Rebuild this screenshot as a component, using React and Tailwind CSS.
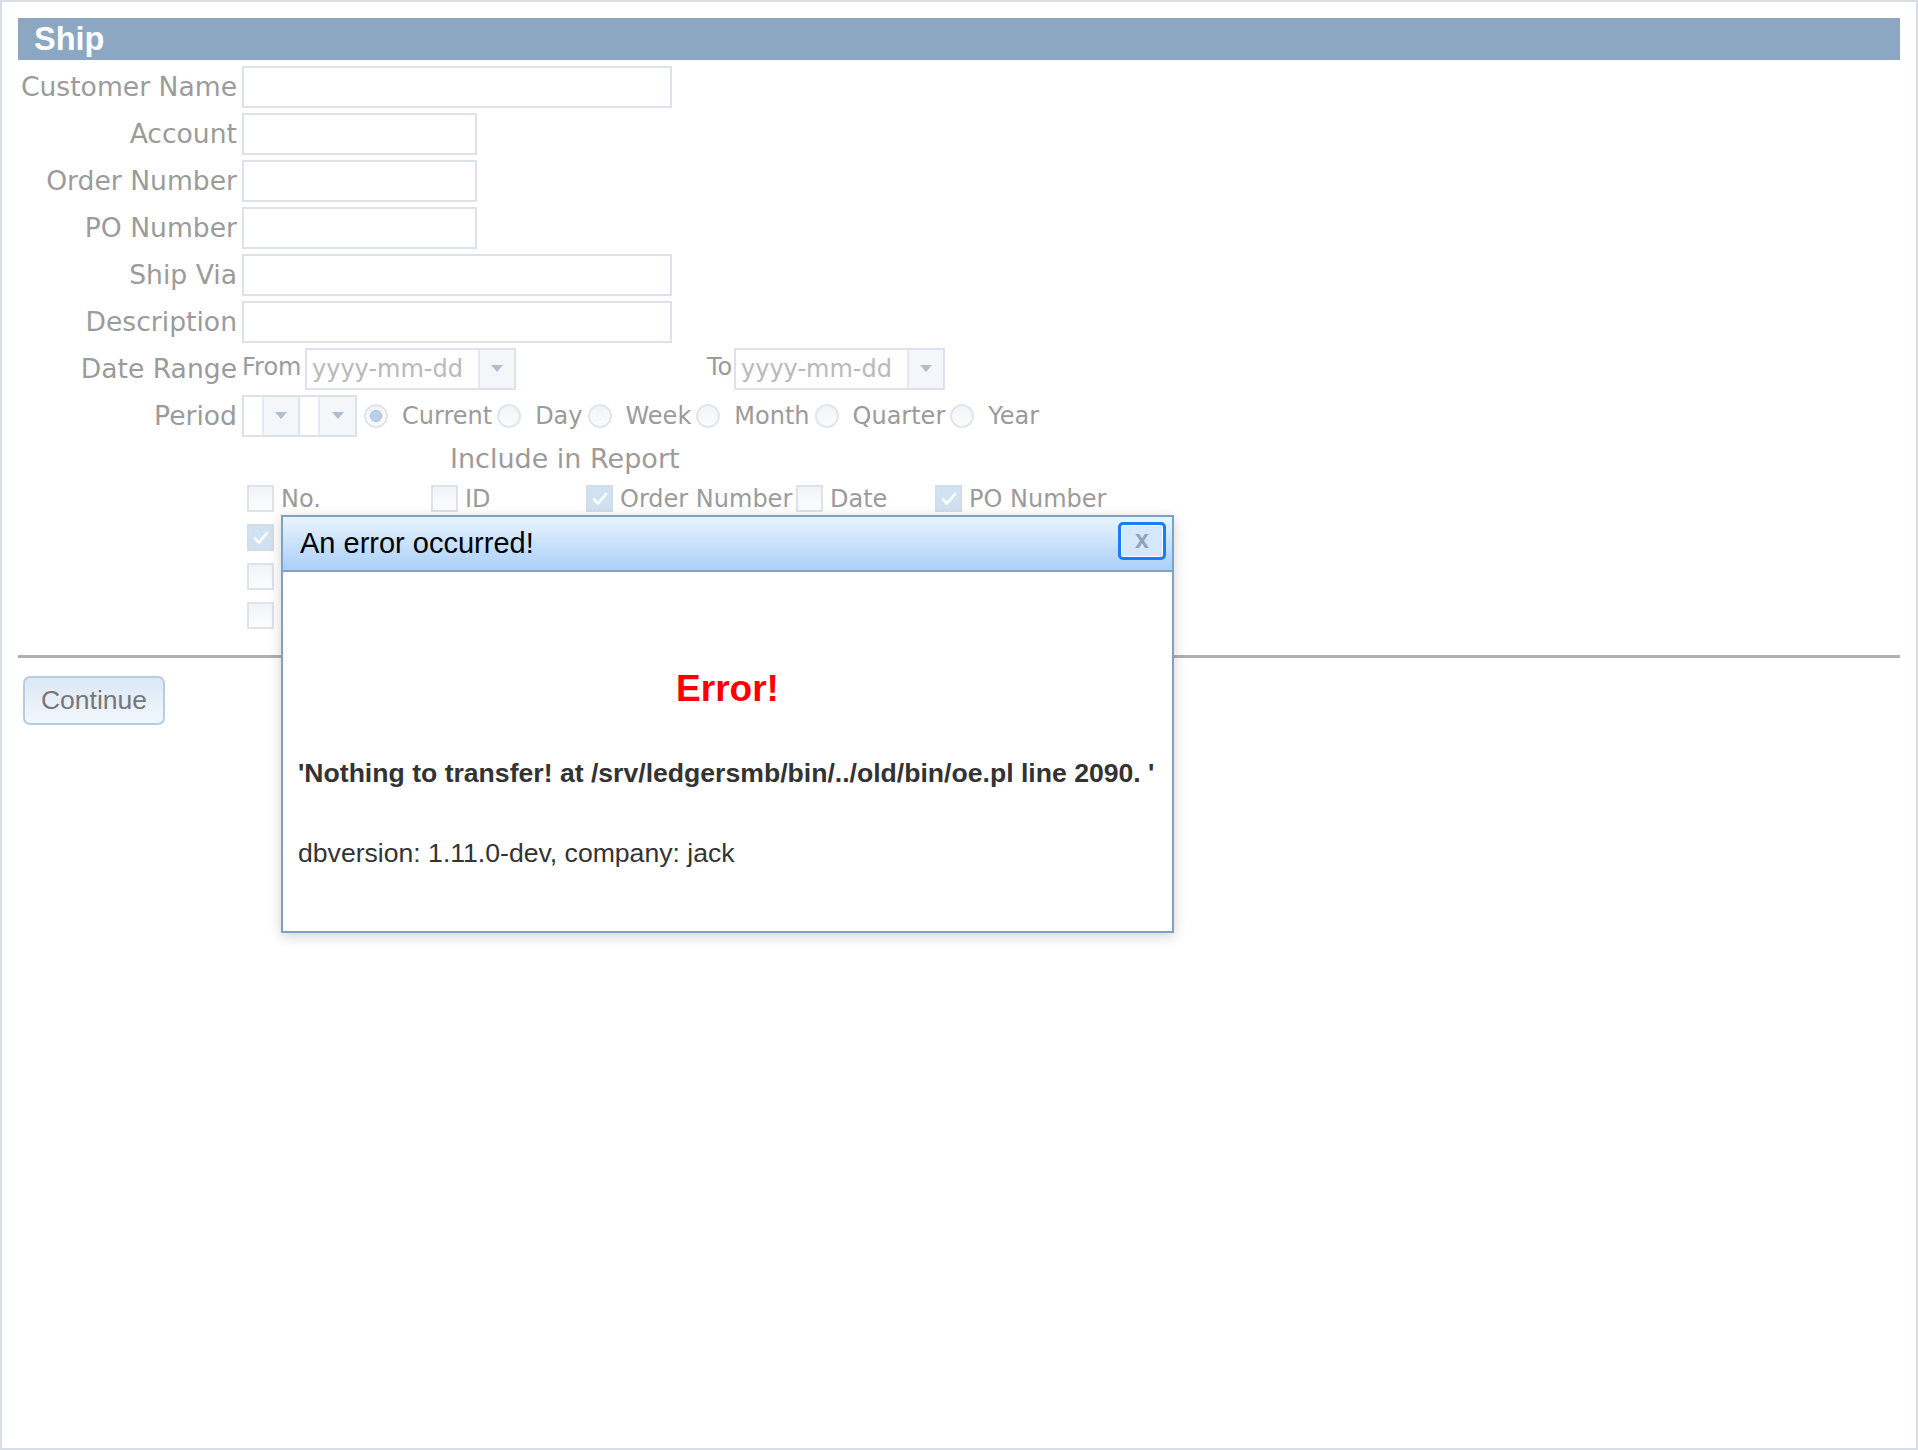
import React from 'react'

const labelCls = "w-[219px] shrink-0 whitespace-nowrap text-right text-[26.6px] leading-[30px] text-[#9b9b9b]"

function Arrow() {
  return (
    <svg width="12" height="7" viewBox="0 0 12 7">
      <path d="M0 0 L12 0 L6 7 Z" fill="#aebdd0" />
    </svg>
  )
}

function TextBox({ wide }) {
  return <div className={wide ? "h-[42px] w-[430px] border-2 border-[#dde2ea] bg-white" : "h-[42px] w-[235px] border-2 border-[#dde2ea] bg-white"} />
}

function DateBox() {
  return (
    <div className="flex h-[42px] w-[211px] border-2 border-[#dde2ea] bg-white">
      <span className="flex-1 pl-[5px] text-[24px] leading-[38px] text-[#b9b9b9]">yyyy-mm-dd</span>
      <span className="flex w-[36px] items-center justify-center border-l-2 border-[#e5e9ee] bg-[#f4f6f9]">
        <Arrow />
      </span>
    </div>
  )
}

function SmallSelect({ w }) {
  return (
    <div className={w === 1 ? "flex h-[42px] w-[58px] border-2 border-[#dde2ea] bg-white" : "flex h-[42px] w-[57px] border-2 border-l-0 border-[#dde2ea] bg-white"}>
      <span className="w-[18px]" />
      <span className="flex flex-1 items-center justify-center border-l-2 border-[#e5e9ee] bg-[#f4f6f9]">
        <Arrow />
      </span>
    </div>
  )
}

function Radio({ checked, label, first }) {
  return (
    <div className={first ? "ml-[7px] flex items-center" : "ml-[5px] flex items-center"}>
      <span className="flex h-[24px] w-[24px] items-center justify-center rounded-full border-2 border-[#e1e6ec] bg-linear-to-b from-[#f1f4f7] to-[#fbfcfd]">
        {checked && <span className="h-[12px] w-[12px] rounded-full border border-[#9fbedc] bg-[#b9d2ea]" />}
      </span>
      <span className="ml-[14px] text-[24px] leading-[30px] text-[#9b9b9b]">{label}</span>
    </div>
  )
}

function Check({ checked, label }) {
  return (
    <div className="flex items-center">
      <span className={checked ? "flex h-[27px] w-[27px] items-center justify-center border-2 border-[#d3dde8] bg-[#d0e1f1]" : "h-[27px] w-[27px] border-2 border-[#dfe3e9] bg-linear-to-b from-[#f1f4f8] to-[#fcfdfe]"}>
        {checked && (
          <svg width="18" height="16" viewBox="0 0 18 16">
            <path d="M3 8.5 L7 12.5 L15 3" stroke="#ffffff" strokeWidth="2.6" fill="none" strokeLinecap="round" strokeLinejoin="round" />
          </svg>
        )}
      </span>
      {label && <span className="ml-[7px] text-[24px] leading-[30px] text-[#9b9b9b]">{label}</span>}
    </div>
  )
}

const checkRows = [
  [[false, 'No.'], [false, 'ID'], [true, 'Order Number'], [false, 'Date'], [true, 'PO Number']],
  [[true], [false], [true], [false], [false]],
  [[false], [false], [false], [false], [false]],
  [[false], [false], [false], [false], [false]],
]

export default function App() {
  return (
    <div className="relative h-[1450px] w-[1918px] border-2 border-[#d9dde6] bg-white p-4 font-['DejaVu_Sans',sans-serif]">
      <div className="flex h-[42px] items-center bg-[#8ba7c2] pl-4">
        <span className="font-['Liberation_Sans',sans-serif] text-[32.5px] font-bold leading-none text-white">Ship</span>
      </div>

      <div className="mt-[3px]">
        <div className="flex h-[47px] items-center">
          <span className={labelCls}>Customer Name</span>
          <div className="ml-[5px]"><TextBox wide /></div>
        </div>
        <div className="flex h-[47px] items-center">
          <span className={labelCls}>Account</span>
          <div className="ml-[5px]"><TextBox /></div>
        </div>
        <div className="flex h-[47px] items-center">
          <span className={labelCls}>Order Number</span>
          <div className="ml-[5px]"><TextBox /></div>
        </div>
        <div className="flex h-[47px] items-center">
          <span className={labelCls}>PO Number</span>
          <div className="ml-[5px]"><TextBox /></div>
        </div>
        <div className="flex h-[47px] items-center">
          <span className={labelCls}>Ship Via</span>
          <div className="ml-[5px]"><TextBox wide /></div>
        </div>
        <div className="flex h-[47px] items-center">
          <span className={labelCls}>Description</span>
          <div className="ml-[5px]"><TextBox wide /></div>
        </div>
        <div className="flex h-[47px] items-center">
          <span className={labelCls}>Date Range</span>
          <div className="ml-[5px] flex items-center">
            <span className="mb-[4px] w-[63px] text-[24px] leading-[30px] text-[#9b9b9b]">From</span>
            <DateBox />
            <span className="mb-[4px] ml-[191px] w-[27px] text-[24px] leading-[30px] text-[#9b9b9b]">To</span>
            <DateBox />
          </div>
        </div>
        <div className="flex h-[47px] items-center">
          <span className={labelCls}>Period</span>
          <div className="ml-[5px] flex items-center">
            <SmallSelect w={1} />
            <SmallSelect w={2} />
            <Radio first checked label="Current" />
            <Radio label="Day" />
            <Radio label="Week" />
            <Radio label="Month" />
            <Radio label="Quarter" />
            <Radio label="Year" />
          </div>
        </div>

        <div className="flex h-[40px] items-center pl-[432px] text-[27px] text-[#9b9b9b]">Include in Report</div>

        <div className="ml-[229px]">
          {checkRows.map((row, i) => (
            <div key={i} className="grid h-[39px] grid-cols-[184px_155px_210px_139px_200px] items-center">
              {row.map(([c, l], j) => (
                <Check key={j} checked={c} label={l} />
              ))}
            </div>
          ))}
        </div>
      </div>

      <div className="mt-[20px] h-[3px] bg-[#b0b0b0]" />

      <button className="ml-[5px] mt-[18px] flex h-[49px] w-[142px] items-center justify-center rounded-[7px] border-2 border-[#b8cce0] bg-linear-to-b from-[#dce8f6] to-[#f2f7fc] font-['Liberation_Sans',sans-serif] text-[26.5px] text-[#777777]">
        Continue
      </button>

      <div className="absolute left-[279px] top-[513px] flex h-[418px] w-[893px] flex-col border-2 border-[#7ea2c3] bg-white font-['Liberation_Sans',sans-serif] shadow-[0_3px_12px_rgba(0,0,0,0.18)]">
        <div className="relative flex h-[55px] shrink-0 items-center border-b-2 border-[#7ea2c3] bg-linear-to-b from-[#eaf4fe] to-[#a9cff9] pl-[17px]">
          <span className="text-[29px] leading-none text-black">An error occurred!</span>
          <span className="absolute right-[6px] top-[5px] flex h-[38px] w-[48px] items-center justify-center rounded-[5px] border-[3px] border-[#1a7cf9] bg-[#d5e8fb] shadow-[inset_0_0_0_1px_#ffffff]">
            <span className="mb-[3px] text-[25px] font-bold leading-none text-[#8ea3ba]">x</span>
          </span>
        </div>
        <div className="px-[15px] pt-[95px]">
          <h1 className="text-center text-[37px] font-bold leading-[44px] text-[#ff0000]">Error!</h1>
          <p className="mt-[47px] whitespace-nowrap text-[26.6px] font-bold leading-[30px] text-[#333333]">'Nothing to transfer! at /srv/ledgersmb/bin/../old/bin/oe.pl line 2090. '</p>
          <p className="mt-[50px] text-[26.6px] leading-[30px] text-[#333333]">dbversion: 1.11.0-dev, company: jack</p>
        </div>
      </div>
    </div>
  )
}
